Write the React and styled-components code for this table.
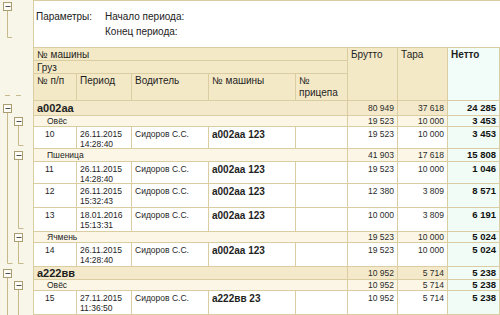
import React from "react";
import styled, { createGlobalStyle } from "styled-components";

const GlobalStyle = createGlobalStyle`
  html, body {
    margin: 0;
    padding: 0;
    background: #ffffff;
  }
  body {
    font-family: "Liberation Sans", Arial, sans-serif;
    color: #1e1e1e;
    overflow: hidden;
  }
`;

const COLS = "43px 55px 77px 87px 52px 50px 50px 52px";
const LINE = "#d9cda1";
const TREE = "#c6b98c";

const groups = [
  {
    car: "а002аа", brutto: "80 949", tara: "37 618", netto: "24 285", h: 15,
    items: [
      {
        cargo: "Овёс", brutto: "19 523", tara: "10 000", netto: "3 453", h: 11,
        rows: [
          { n: 10, date: "26.11.2015", time: "14:28:40", car: "а002аа 123", brutto: "19 523", tara: "10 000", netto: "3 453", h: 22 },
        ],
      },
      {
        cargo: "Пшеница", brutto: "41 903", tara: "17 618", netto: "15 808", h: 13,
        rows: [
          { n: 11, date: "26.11.2015", time: "14:28:40", car: "а002аа 123", brutto: "19 523", tara: "10 000", netto: "1 046", h: 22 },
          { n: 12, date: "26.11.2015", time: "15:32:43", car: "а002аа 123", brutto: "12 380", tara: "3 809", netto: "8 571", h: 24 },
          { n: 13, date: "18.01.2016", time: "15:13:31", car: "а002аа 123", brutto: "10 000", tara: "3 809", netto: "6 191", h: 24 },
        ],
      },
      {
        cargo: "Ячмень", brutto: "19 523", tara: "10 000", netto: "5 024", h: 11,
        rows: [
          { n: 14, date: "26.11.2015", time: "14:28:40", car: "а002аа 123", brutto: "19 523", tara: "10 000", netto: "5 024", h: 24 },
        ],
      },
    ],
  },
  {
    car: "а222вв", brutto: "10 952", tara: "5 714", netto: "5 238", h: 13, open: true,
    items: [
      {
        cargo: "Овёс", brutto: "10 952", tara: "5 714", netto: "5 238", h: 11,
        rows: [
          { n: 15, date: "27.11.2015", time: "11:36:50", car: "а222вв 23", brutto: "10 952", tara: "5 714", netto: "5 238", h: 24 },
        ],
      },
    ],
  },
];

const LEVEL_X = [7.5, 18.5];

// tree outline marks in the left gutter, one svg per row
const Tree = ({ h, marks, boxY }) => (
  <TreeSvg width="33" height={h}>
    {marks.map((m, i) => {
      const x = LEVEL_X[i];
      if (m === "pass") return <line key={i} x1={x} x2={x} y1={0} y2={h} />;
      if (m === "end")
        return (
          <g key={i}>
            <line x1={x} x2={x} y1={0} y2={h - 3.5} />
            <line x1={x} x2={x + 5} y1={h - 3.5} y2={h - 3.5} />
          </g>
        );
      if (m === "box")
        return (
          <g key={i}>
            <line x1={x} x2={x} y1={boxY + 4} y2={h} />
            <rect className="box" x={x - 4} y={boxY - 4} width="8" height="8" />
            <line className="minus" x1={x - 2} x2={x + 3} y1={boxY} y2={boxY} />
          </g>
        );
      return null;
    })}
  </TreeSvg>
);

const App = () => {
  const rows = [];
  groups.forEach((g, gi) => {
    rows.push(
      <Band key={`g${gi}`}>
        <Gutter>
          <Tree h={g.h} boxY={Math.floor(g.h / 2) + 0.5} marks={["box"]} />
        </Gutter>
        <Row $h={g.h}>
          <GroupLabel>{g.car}</GroupLabel>
          <Num $kind="group">{g.brutto}</Num>
          <Num $kind="group">{g.tara}</Num>
          <Netto $kind="group">{g.netto}</Netto>
        </Row>
      </Band>
    );
    g.items.forEach((s, si) => {
      const lastSub = si === g.items.length - 1;
      rows.push(
        <Band key={`s${gi}-${si}`}>
          <Gutter>
            <Tree h={s.h} boxY={Math.floor(s.h / 2) + 0.5} marks={["pass", "box"]} />
          </Gutter>
          <Row $h={s.h}>
            <SubLabel>{s.cargo}</SubLabel>
            <Num $kind="sub">{s.brutto}</Num>
            <Num $kind="sub">{s.tara}</Num>
            <Netto $kind="sub">{s.netto}</Netto>
          </Row>
        </Band>
      );
      s.rows.forEach((d, di) => {
        const lastDet = di === s.rows.length - 1;
        const l1 = lastDet && !g.open ? "end" : "pass";
        const l0 = lastDet && lastSub && !g.open ? "end" : "pass";
        rows.push(
          <Band key={`d${d.n}`}>
            <Gutter>
              <Tree h={d.h} marks={[l0, l1]} />
            </Gutter>
            <Row $h={d.h}>
              <Cell $indent>{d.n}</Cell>
              <Cell>
                {d.date}
                <br />
                {d.time}
              </Cell>
              <Cell>Сидоров С.С.</Cell>
              <CarCell>{d.car}</CarCell>
              <Cell />
              <Num>{d.brutto}</Num>
              <Num>{d.tara}</Num>
              <Netto>{d.netto}</Netto>
            </Row>
          </Band>
        );
      });
    });
  });

  return (
    <Sheet>
      <GlobalStyle />
      <Band>
        <Gutter>
          <TreeSvg width="33" height="47">
            <line x1="7.5" x2="7.5" y1="10" y2="37.5" />
            <line x1="7.5" x2="12" y1="37.5" y2="37.5" />
            <rect className="box" x="3.5" y="2.5" width="8" height="8" />
            <line className="minus" x1="5.5" x2="10.5" y1="6.5" y2="6.5" />
          </TreeSvg>
        </Gutter>
        <Params>
          <span>Параметры:</span>
          <span>Начало периода:</span>
          <span />
          <span>Конец периода:</span>
        </Params>
      </Band>
      <Band>
        <Gutter>
          <TreeSvg width="33" height="54">
            <line x1="5" x2="10" y1="48.5" y2="48.5" />
            <line x1="16" x2="21" y1="48.5" y2="48.5" />
          </TreeSvg>
        </Gutter>
        <HeadGrid>
          <HeadCell $col="1 / 6" $row="1">№ машины</HeadCell>
          <HeadCell $col="1 / 6" $row="2">Груз</HeadCell>
          <HeadCell $col="1" $row="3">№ п/п</HeadCell>
          <HeadCell $col="2" $row="3">Период</HeadCell>
          <HeadCell $col="3" $row="3">Водитель</HeadCell>
          <HeadCell $col="4" $row="3">№ машины</HeadCell>
          <HeadCell $col="5" $row="3">
            №<br />прицепа
          </HeadCell>
          <HeadCell $col="6" $row="1 / 4">Брутто</HeadCell>
          <HeadCell $col="7" $row="1 / 4">Тара</HeadCell>
          <HeadCell $col="8" $row="1 / 4" $netto>
            Нетто
          </HeadCell>
        </HeadGrid>
      </Band>
      {rows}
    </Sheet>
  );
};

const Sheet = styled.div`
  width: 500px;
  height: 315px;
  overflow: hidden;
  display: flex;
  flex-direction: column;
`;

const Band = styled.div`
  display: flex;
  flex: none;
`;

const Gutter = styled.div`
  width: 34px;
  flex: none;
  box-sizing: border-box;
  background: #f8f5e9;
  border-right: 1px solid ${LINE};
  display: flex;
`;

const TreeSvg = styled.svg`
  display: block;
  flex: none;
  line {
    stroke: ${TREE};
    stroke-width: 1;
  }
  .box {
    fill: #fdfcf7;
    stroke: #ab9d72;
    stroke-width: 1;
  }
  .minus {
    stroke: #505050;
  }
`;

const Params = styled.div`
  flex: 1;
  height: 47px;
  box-sizing: border-box;
  border-top: 1px solid ${LINE};
  display: grid;
  grid-template-columns: 69px auto;
  grid-auto-rows: 15px;
  align-content: start;
  padding: 8px 0 0 2px;
  font-size: 10px;
  line-height: 15px;
  color: #222;
`;

const HeadGrid = styled.div`
  flex: 1;
  display: grid;
  grid-template-columns: ${COLS};
  grid-template-rows: 14px 13px 27px;
  font-size: 10px;
`;

const HeadCell = styled.div`
  grid-column: ${(p) => p.$col};
  grid-row: ${(p) => p.$row};
  box-sizing: border-box;
  background: ${(p) => (p.$netto ? "#f2fcf8" : "#f3e9c7")};
  border-right: 1px solid ${LINE};
  border-bottom: 1px solid ${LINE};
  border-top: ${(p) => (String(p.$row).startsWith("1") ? `1px solid ${LINE}` : "none")};
  padding: 1px 3px 0;
  line-height: 12px;
  font-weight: ${(p) => (p.$netto ? 700 : 400)};
  overflow: hidden;
  white-space: nowrap;
`;

const Row = styled.div`
  flex: 1;
  display: grid;
  grid-template-columns: ${COLS};
  height: ${(p) => p.$h}px;
`;

const Cell = styled.div`
  box-sizing: border-box;
  border-right: 1px solid ${LINE};
  border-bottom: 1px solid ${LINE};
  padding: 2px 3px 0 ${(p) => (p.$indent ? 11 : 3)}px;
  font-size: 8.5px;
  line-height: 10px;
  white-space: nowrap;
  overflow: hidden;
  background: #ffffff;
`;

const CarCell = styled(Cell)`
  font-size: 10px;
  font-weight: 700;
  line-height: 12px;
  padding-top: 2px;
`;

const bandBg = {
  group: "#f4eacb",
  sub: "#fbf6e6",
};

const BandLabel = styled.div`
  grid-column: 1 / 6;
  box-sizing: border-box;
  border-right: 1px solid ${LINE};
  border-bottom: 1px solid ${LINE};
  display: flex;
  align-items: center;
  white-space: nowrap;
`;

const GroupLabel = styled(BandLabel)`
  background: ${bandBg.group};
  padding: 0 3px;
  font-size: 11px;
  font-weight: 700;
`;

const SubLabel = styled(BandLabel)`
  background: ${bandBg.sub};
  padding: 0 3px 0 13px;
  font-size: 8.5px;
`;

const Num = styled.div`
  box-sizing: border-box;
  background: ${(p) => bandBg[p.$kind] || "#ffffff"};
  border-right: 1px solid ${LINE};
  border-bottom: 1px solid ${LINE};
  padding: ${(p) => (p.$kind ? "0 3px" : "2px 3px 0")};
  display: flex;
  justify-content: flex-end;
  align-items: ${(p) => (p.$kind ? "center" : "flex-start")};
  font-size: 8.5px;
  line-height: 10px;
  white-space: nowrap;
  color: #2a2a2a;
`;

const Netto = styled(Num)`
  background: #f0fcf5;
  font-size: 9.5px;
  font-weight: 700;
  color: #111;
`;

export default App;
